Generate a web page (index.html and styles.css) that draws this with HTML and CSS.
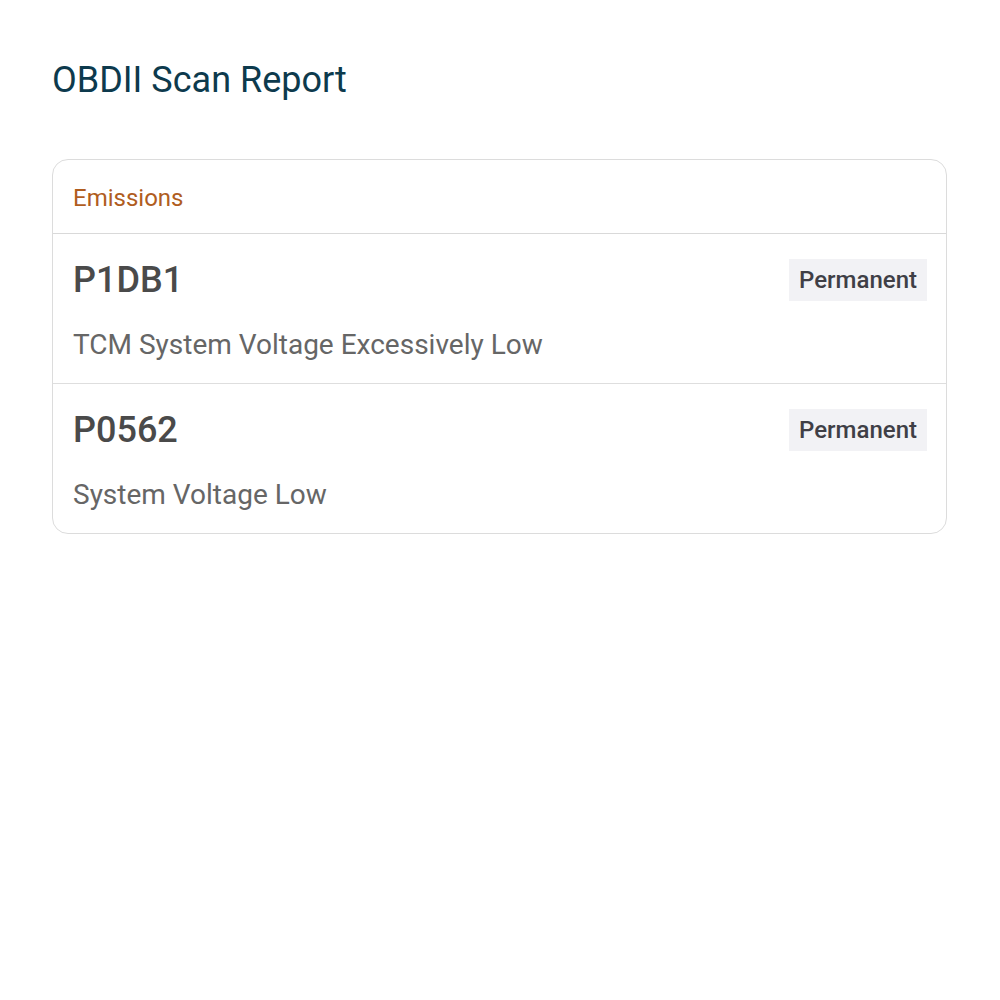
FILE: index.html
```html
<!DOCTYPE html>
<html>
<head>
<meta charset="utf-8">
<link rel="stylesheet" href="styles.css">
</head>
<body>
<main class="page">
  <h1 class="title">OBDII Scan Report</h1>
  <section class="card">
    <div class="card-header">Emissions</div>
    <div class="row">
      <div class="row-top">
        <span class="code">P1DB1</span>
        <span class="badge">Permanent</span>
      </div>
      <div class="desc">TCM System Voltage Excessively Low</div>
    </div>
    <div class="row">
      <div class="row-top">
        <span class="code">P0562</span>
        <span class="badge">Permanent</span>
      </div>
      <div class="desc">System Voltage Low</div>
    </div>
  </section>
</main>
</body>
</html>
```
FILE: styles.css
```css
* { box-sizing: border-box; }
html, body { margin: 0; padding: 0; background: #fff; }
body { font-family: Roboto, "Noto Sans", sans-serif; }
.page { padding: 59px 53px 0 52px; }
.title {
  margin: 0 0 57px 0;
  font-size: 36px;
  line-height: 43px;
  font-weight: 400;
  color: #0d3a4d;
}
.card {
  border: 1px solid #dcdcdc;
  border-radius: 16px;
  overflow: hidden;
}
.card-header {
  padding: 21px 20px 18px;
  font-size: 24px;
  line-height: 34px;
  color: #b05d1e;
  border-bottom: 1px solid #d9d9d9;
}
.row {
  padding: 20px 19px 19px 20px;
  border-bottom: 1px solid #dedede;
}
.row:last-child { border-bottom: none; }
.row-top {
  display: flex;
  justify-content: space-between;
  align-items: center;
  height: 51px;
}
.code {
  font-size: 36px;
  font-weight: 500;
  color: #4a4a4a;
}
.badge {
  background: #f2f2f5;
  color: #3f3f46;
  font-size: 24px;
  font-weight: 500;
  line-height: 42px;
  padding: 0 10px;
}
.desc {
  margin-top: 20px;
  font-size: 28px;
  line-height: 39px;
  color: #666;
}
```
